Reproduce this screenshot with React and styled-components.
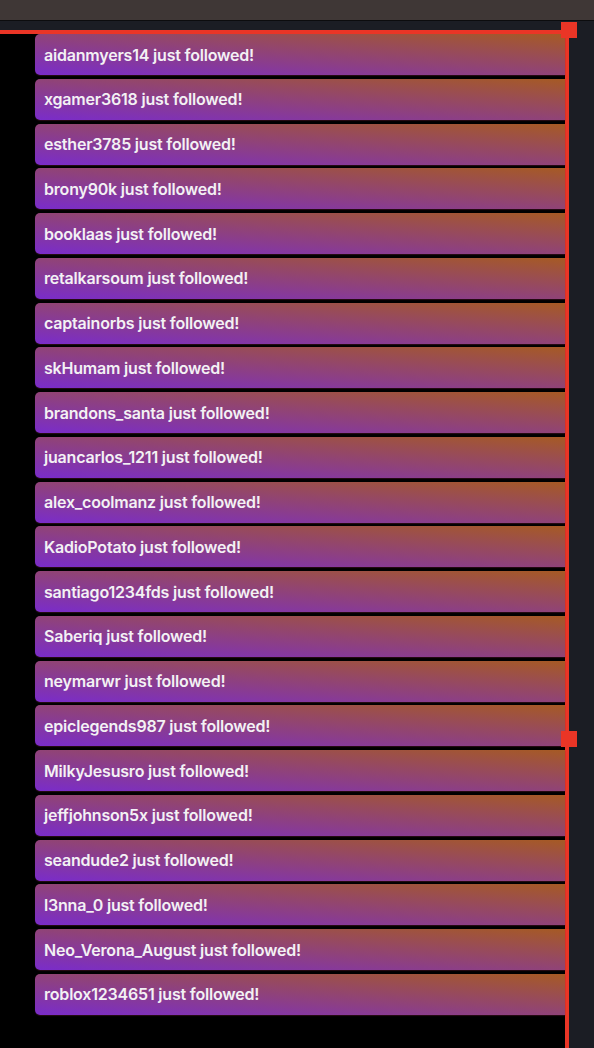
import styled, { createGlobalStyle } from "styled-components";

const GlobalStyle = createGlobalStyle`
  html, body {
    margin: 0;
    padding: 0;
    background: #1b1d24;
  }
`;

const Page = styled.div`
  height: 100vh;
  display: flex;
  flex-direction: column;
  overflow: hidden;
  font-family: Inter, "Noto Sans", sans-serif;
`;

const TopBar = styled.div`
  height: 20px;
  flex-shrink: 0;
  background: #3f3736;
  border-bottom: 1px solid #0c0c0e;
`;

const Strip = styled.div`
  height: 9px;
  flex-shrink: 0;
  background: #1b1d24;
`;

const Workspace = styled.div`
  flex: 1;
  display: flex;
  position: relative;
`;

const Frame = styled.div`
  width: 530px;
  flex-shrink: 0;
  background: #000;
  border-top: 4px solid #ea3526;
  border-right: 4px solid #ea3526;
  padding-left: 35px;
`;

const List = styled.div`
  display: flex;
  flex-direction: column;
  gap: 3.75px;
`;

const Card = styled.div`
  height: 41px;
  display: flex;
  align-items: center;
  padding: 0 9px;
  border-radius: 5px 0 0 5px;
  background: linear-gradient(to top right, #7a2cca, #a65a24);
  box-shadow: 0 1px 1px rgba(50, 15, 25, 0.8);
  color: #f3f1f4;
  font-size: 16px;
  font-weight: 600;
  letter-spacing: -0.2px;
`;

const Handle = styled.div`
  position: absolute;
  left: 561px;
  top: ${(p) => p.$top}px;
  width: 16px;
  height: 16px;
  background: #ea3526;
`;

const followers = [
  "aidanmyers14",
  "xgamer3618",
  "esther3785",
  "brony90k",
  "booklaas",
  "retalkarsoum",
  "captainorbs",
  "skHumam",
  "brandons_santa",
  "juancarlos_1211",
  "alex_coolmanz",
  "KadioPotato",
  "santiago1234fds",
  "Saberiq",
  "neymarwr",
  "epiclegends987",
  "MilkyJesusro",
  "jeffjohnson5x",
  "seandude2",
  "l3nna_0",
  "Neo_Verona_August",
  "roblox1234651",
];

const App = () => {
  return (
    <Page>
      <GlobalStyle />
      <TopBar />
      <Strip />
      <Workspace>
        <Frame>
          <List>
            {followers.map((name) => (
              <Card key={name}>{name} just followed!</Card>
            ))}
          </List>
        </Frame>
        <Handle $top={-8} />
        <Handle $top={701} />
      </Workspace>
    </Page>
  );
};

export default App;
